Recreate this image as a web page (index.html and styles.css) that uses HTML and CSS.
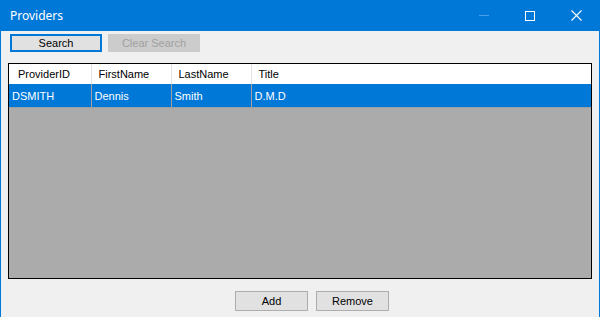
FILE: index.html
```html
<!DOCTYPE html>
<html lang="en">
<head>
  <meta charset="UTF-8">
  <title>Providers</title>
  <link rel="stylesheet" href="styles.css">
</head>
<body>
  <div class="window">
    <div class="titlebar">
      <span class="title">Providers</span>
      <div class="controls">
        <span class="ctl ctl-min"><span class="min-line"></span></span>
        <span class="ctl"><span class="max-box"></span></span>
        <span class="ctl">
          <svg width="11" height="11" viewBox="0 0 11 11">
            <path d="M0.5 0.5 L10.5 10.5 M10.5 0.5 L0.5 10.5" stroke="#ffffff" stroke-width="1.1" fill="none"/>
          </svg>
        </span>
      </div>
    </div>

    <div class="toolbar">
      <button class="btn btn-focus">Search</button>
      <button class="btn btn-disabled" disabled>Clear Search</button>
    </div>

    <div class="grid">
      <table>
        <thead>
          <tr>
            <th class="col-id">ProviderID</th>
            <th class="col">FirstName</th>
            <th class="col">LastName</th>
            <th>Title</th>
          </tr>
        </thead>
        <tbody>
          <tr class="selected">
            <td>DSMITH</td>
            <td>Dennis</td>
            <td>Smith</td>
            <td>D.M.D</td>
          </tr>
        </tbody>
      </table>
    </div>

    <div class="footer">
      <button class="btn btn-small">Add</button>
      <button class="btn btn-small">Remove</button>
    </div>
  </div>
</body>
</html>
```

FILE: styles.css
```css
* {
  margin: 0;
  padding: 0;
  box-sizing: border-box;
}

body {
  width: 600px;
  height: 317px;
  overflow: hidden;
  font-family: "Liberation Sans", Arial, sans-serif;
  font-size: 11px;
  color: #000;
}

.window {
  width: 600px;
  height: 317px;
  background-color: #f0f0f0;
  border-left: 1px solid #0078d7;
  border-right: 1px solid #0078d7;
  display: flex;
  flex-direction: column;
}

/* Title bar */
.titlebar {
  height: 31px;
  background-color: #0078d7;
  color: #ffffff;
  display: flex;
  align-items: center;
  padding-left: 9px;
}

.title {
  font-family: "Noto Sans", "Open Sans", sans-serif;
  font-size: 12px;
  margin-top: -1px;
}

.controls {
  margin-left: auto;
  display: flex;
  height: 31px;
}

.ctl {
  width: 46px;
  display: flex;
  align-items: center;
  justify-content: center;
}

.min-line {
  width: 10px;
  height: 1px;
  background-color: #4c9fe3;
}

.max-box {
  width: 10px;
  height: 10px;
  border: 1px solid #ffffff;
}

/* Buttons */
.btn {
  font-family: "Liberation Sans", Arial, sans-serif;
  font-size: 11px;
  background-color: #e1e1e1;
  border: 1px solid #adadad;
  color: #000;
  height: 18px;
  width: 92px;
}

.btn-focus {
  border: 2px solid #0078d7;
}

.btn-disabled {
  background-color: #cccccc;
  border-color: #cccccc;
  color: #a0a0a0;
}

.toolbar {
  display: flex;
  gap: 6px;
  padding: 3px 0 0 9px;
}

/* Data grid */
.grid {
  margin: 11px 7px 0 7px;
  height: 216px;
  border: 1px solid #000;
  background-color: #ababab;
}

.grid table {
  width: 100%;
  border-collapse: collapse;
  table-layout: fixed;
}

.grid th {
  background-color: #ffffff;
  font-weight: normal;
  text-align: left;
  height: 20px;
  padding-left: 7px;
  border-right: 1px solid #e3e3e3;
}

.grid th.col-id {
  width: 82px;
  padding-left: 9px;
}

.grid th.col {
  width: 80px;
}

.grid td {
  height: 23px;
  padding-left: 3px;
  padding-top: 1px;
  border-right: 1px solid #a0a0a0;
  border-bottom: 1px solid #a0a0a0;
}

.grid td:last-child,
.grid th:last-child {
  border-right: none;
}

.selected td {
  background-color: #0078d7;
  color: #ffffff;
}

/* Footer */
.footer {
  display: flex;
  gap: 8px;
  padding-top: 12px;
  padding-left: 234px;
}

.btn-small {
  width: 73px;
  height: 20px;
}
```
